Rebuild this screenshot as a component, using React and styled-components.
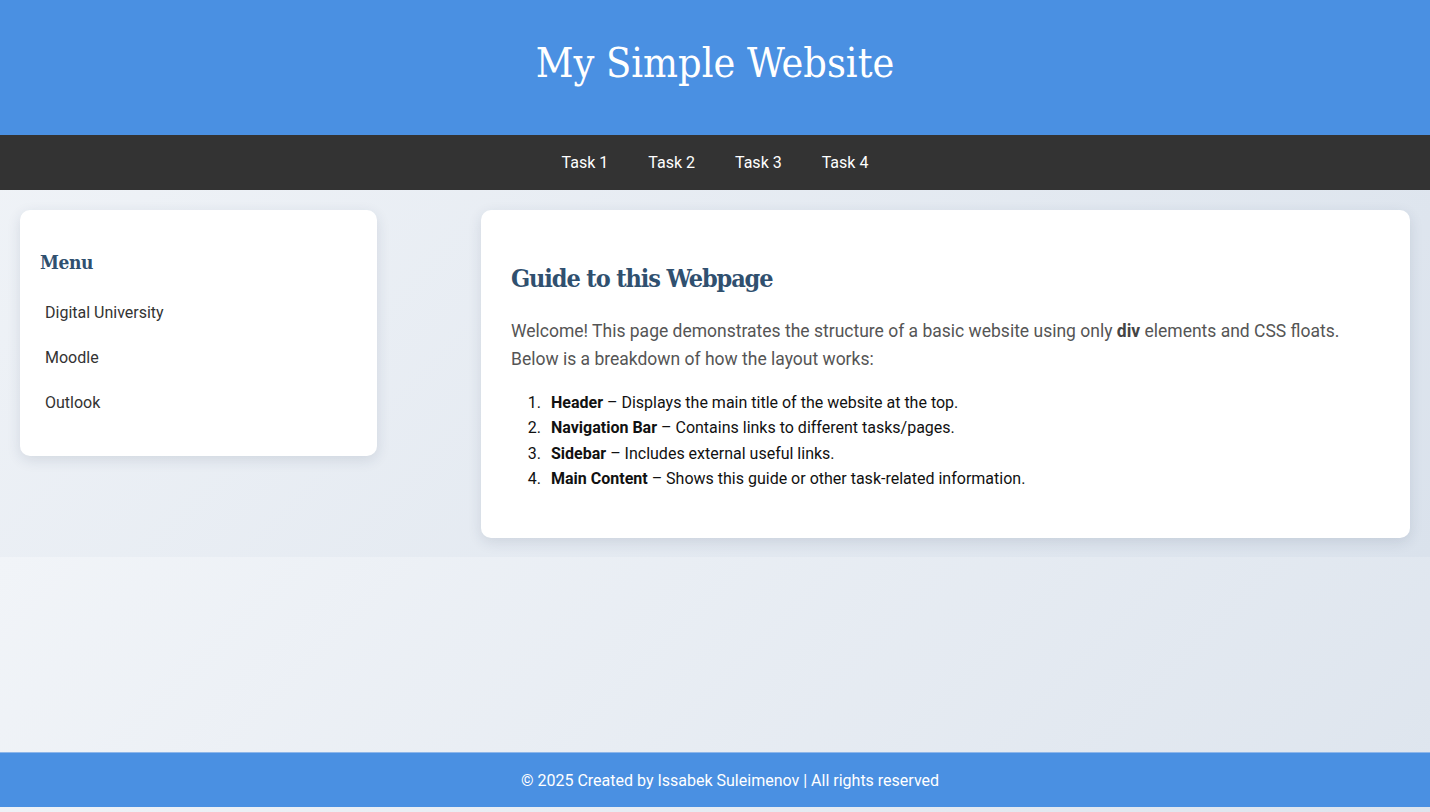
import styled, { createGlobalStyle } from "styled-components";

const GlobalStyle = createGlobalStyle`
  html, body {
    margin: 0;
    padding: 0;
  }
  body {
    font-family: Roboto, "Liberation Sans", sans-serif;
  }
`

const Page = styled.div`
  min-height: 100vh;
  box-sizing: border-box;
  display: flex;
  flex-direction: column;
  padding-bottom: 5px;
  background: linear-gradient(135deg, #f1f4f8 0%, #dae2ec 100%);
  background-size: 100% 557px;
  background-repeat: repeat-y;
`

const Header = styled.header`
  height: 135px;
  box-sizing: border-box;
  padding-bottom: 10px;
  background-color: #4a90e2;
  display: grid;
  place-content: center;

  h1 {
    margin: 0;
    color: white;
    font-family: "DejaVu Serif Condensed", "DejaVu Serif", serif;
    font-stretch: condensed;
    font-weight: normal;
    font-size: 41px;
  }
`

const Nav = styled.nav`
  height: 55px;
  background-color: #333333;
  display: flex;
  justify-content: center;
  align-items: center;
`

const NavLink = styled.a`
  color: white;
  text-decoration: none;
  font-size: 16px;
  padding: 0 20px;
`

const Content = styled.div`
  padding: 20px;
  display: flex;
  justify-content: space-between;
  align-items: flex-start;
`

const Card = styled.div`
  background-color: white;
  border-radius: 10px;
  box-sizing: border-box;
  width: ${(p) => p.width};
  padding: ${(p) => p.pad};
  box-shadow: 0 4px 14px rgba(30, 50, 80, 0.12);
`

const Heading = styled.h2`
  font-family: "DejaVu Serif Condensed", "DejaVu Serif", serif;
  font-stretch: condensed;
  color: #30506f;
  font-weight: bold;
  font-size: ${(p) => p.size};
  letter-spacing: ${(p) => p.track};
  margin: ${(p) => p.margin};
`

const MenuList = styled.ul`
  list-style: none;
  padding: 0;
  margin: 0 0 14px 0;

  a {
    display: block;
    padding: 10px 5px;
    margin-bottom: 6px;
    color: #333;
    text-decoration: none;
    font-size: 16px;
  }
`

const Intro = styled.p`
  color: #555;
  font-size: 17.5px;
  line-height: 28px;
  margin: 0 0 17px 0;

  b {
    color: #444;
  }
`

const Steps = styled.ol`
  margin: 0 0 17px 0;
  padding-left: 34px;
  color: #111;
  font-size: 16px;
  line-height: 25.3px;

  li {
    padding-left: 6px;
  }
`

const Spacer = styled.div`
  flex: 1;
`

const Footer = styled.footer`
  height: 55px;
  box-sizing: border-box;
  padding-left: 30px;
  background-color: #4a90e2;
  border-top: 1px solid #8db6ea;
  display: grid;
  place-content: center;
  color: white;
  font-size: 16px;
`

const links = ["Digital University", "Moodle", "Outlook"];

const steps = [
  ["Header", "Displays the main title of the website at the top."],
  ["Navigation Bar", "Contains links to different tasks/pages."],
  ["Sidebar", "Includes external useful links."],
  ["Main Content", "Shows this guide or other task-related information."],
];

function App() {
  return (
    <Page>
      <GlobalStyle />
      <Header>
        <h1>My Simple Website</h1>
      </Header>
      <Nav>
        <NavLink href="#">Task 1</NavLink>
        <NavLink href="#">Task 2</NavLink>
        <NavLink href="#">Task 3</NavLink>
        <NavLink href="#">Task 4</NavLink>
      </Nav>
      <Content>
        <Card width="357px" pad="20px">
          <Heading as="h3" size="19px" track="-0.4px" margin="21px 0 20px 0">Menu</Heading>
          <MenuList>
            {links.map((l) => (
              <li key={l}><a href="#">{l}</a></li>
            ))}
          </MenuList>
        </Card>
        <Card width="929px" pad="30px">
          <Heading size="25px" track="-1.1px" margin="24px 0 24px 0">Guide to this Webpage</Heading>
          <Intro>
            Welcome! This page demonstrates the structure of a basic website using only <b>div</b> elements and CSS floats.
            Below is a breakdown of how the layout works:
          </Intro>
          <Steps>
            {steps.map(([t, d]) => (
              <li key={t}><b>{t}</b> – {d}</li>
            ))}
          </Steps>
        </Card>
      </Content>
      <Spacer />
      <Footer>© 2025 Created by Issabek Suleimenov | All rights reserved</Footer>
    </Page>
  )
}

export default App
